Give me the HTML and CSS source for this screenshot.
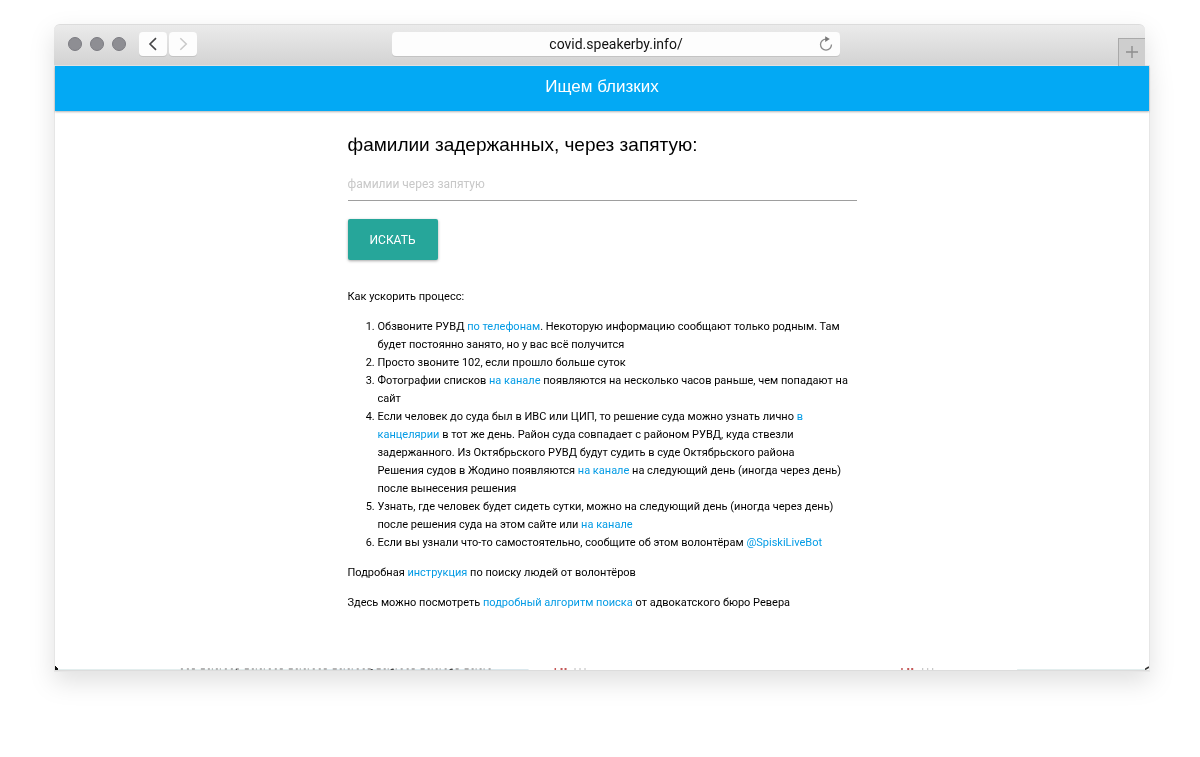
FILE: index.html
```html
<!DOCTYPE html>
<html lang="ru">
<head>
<meta charset="utf-8">
<meta name="viewport" content="width=device-width, initial-scale=1">
<title>Ищем близких</title>
<link rel="stylesheet" href="styles.css">
</head>
<body>
<div class="window">
  <div class="toolbar">
    <div class="toolbar-left">
      <div class="lights"><span class="light"></span><span class="light"></span><span class="light"></span></div>
      <div class="nav">
        <button class="nav-button" type="button" aria-label="Назад"><svg width="28" height="24" viewBox="0 0 28 24"><path d="M17 6.2 11 12l6 5.8" fill="none" stroke="#454547" stroke-width="1.6"/></svg></button>
        <button class="nav-button" type="button" aria-label="Вперёд"><svg width="28" height="24" viewBox="0 0 28 24"><path d="M11.3 6.2 17.3 12l-6 5.8" fill="none" stroke="#c9c9c9" stroke-width="1.5"/></svg></button>
      </div>
    </div>
    <div class="address">
      <input class="address-input" type="text" aria-label="Адрес" value="covid.speakerby.info/">
      <button class="reload" type="button" aria-label="Обновить"><svg width="14" height="16" viewBox="0 0 14 16"><path d="M7 3.1A5.5 5.5 0 1 0 12.5 8.6" fill="none" stroke="#8a8a8a" stroke-width="1.3"/><path d="M6.2.3 10.8 3.1 6.2 6z" fill="#777"/></svg></button>
    </div>
    <div class="toolbar-right">
      <button class="new-tab" type="button" aria-label="Новая вкладка"><svg width="26" height="27" viewBox="0 0 26 27"><path d="M13 7v12M7 13h12" stroke="#8d8d8d" stroke-width="1.4"/></svg></button>
    </div>
  </div>
  <div class="page">
    <header class="site-header">Ищем близких</header>
    <main class="content">
      <form class="search">
        <label class="search-label" for="names">фамилии задержанных, через запятую:</label>
        <input class="search-input" id="names" type="text" placeholder="фамилии через запятую">
        <button class="search-button" type="button">ИСКАТЬ</button>
      </form>
      <p class="text">Как ускорить процесс:</p>
      <ol class="steps">
        <li>Обзвоните РУВД <a href="#">по телефонам</a>. Некоторую информацию сообщают только родным. Там<br>будет постоянно занято, но у вас всё получится</li>
        <li>Просто звоните 102, если прошло больше суток</li>
        <li>Фотографии списков <a href="#">на канале</a> появляются на несколько часов раньше, чем попадают на<br>сайт</li>
        <li>Если человек до суда был в ИВС или ЦИП, то решение суда можно узнать лично <a href="#">в<br>канцелярии</a> в тот же день. Район суда совпадает с районом РУВД, куда ствезли<br>задержанного. Из Октябрьского РУВД будут судить в суде Октябрьского района<br>Решения судов в Жодино появляются <a href="#">на канале</a> на следующий день (иногда через день)<br>после вынесения решения</li>
        <li>Узнать, где человек будет сидеть сутки, можно на следующий день (иногда через день)<br>после решения суда на этом сайте или <a href="#">на канале</a></li>
        <li>Если вы узнали что-то самостоятельно, сообщите об этом волонтёрам <a href="#">@SpiskiLiveBot</a></li>
      </ol>
      <p class="text">Подробная <a href="#">инструкция</a> по поиску людей от волонтёров</p>
      <p class="text">Здесь можно посмотреть <a href="#">подробный алгоритм поиска</a> от адвокатского бюро Ревера</p>
    </main>
    <div class="edge">
      <svg class="edge-corner" width="3" height="4" viewBox="0 0 3 4"><path d="M0 0h1v1h1v1h1v2H0z" fill="#111"/></svg>
      <svg class="edge-marks" viewBox="0 0 1088 4" preserveAspectRatio="none">
        <path d="M0 3.5H268M960 3.5h128" stroke="#e3eeee"/>
        <path d="M268 3.5h203" stroke="#dbe8ed"/>
        <path d="M123 3h312" stroke="#b4b4b4" stroke-width="2" stroke-dasharray="2 4 2 3 3 6 4 3 2 2 1 3 2 2 1 4"/>
        <path d="M178 3.5h1M313 3.5h2M333 3.5h3M392 3.5h3" stroke="#444"/>
        <path d="M497 3h1.500M503 3h2M507 3h2M844 3h1.500M850 3h2M854 3h2" stroke="#c45757" stroke-width="2"/>
        <path d="M517 3h1M522 3h1M527 3h1M865 3h1M870 3h1M875 3h1" stroke="#bbb" stroke-width="2"/>
      </svg>
      <svg class="edge-corner" width="4" height="4" viewBox="0 0 4 4"><path d="M0 3.500 4 1" stroke="#333" stroke-width="1.500"/></svg>
    </div>
  </div>
</div>
</body>
</html>
```
FILE: styles.css
```css
* { box-sizing: border-box; }

body {
  margin: 0;
  padding: 24px 51px 40px 54px;
  background: #fff;
  color: #000;
  font-family: Roboto, "Liberation Sans", Arial, sans-serif;
  font-size: 11px;
  line-height: 18px;
}

button, input { font-family: inherit; border: 0; padding: 0; }
a { color: #039be5; text-decoration: none; }

.window { filter: drop-shadow(0 10px 12px rgba(0, 0, 0, 0.12)); }

.toolbar {
  display: grid;
  grid-template-columns: 17fr minmax(0, 448px) 16fr;
  align-items: start;
  height: 42px;
  margin-right: 4px;
  padding: 7px 0 0 14px;
  border-top: 1px solid #dcdcdc;
  border-radius: 6px 6px 0 0;
  background: linear-gradient(#ebebeb, #d2d2d2);
}

.toolbar-left { display: flex; align-items: center; gap: 13px; }
.lights { display: flex; gap: 8px; }
.light { width: 14px; height: 14px; border: 1px solid #7c7c82; border-radius: 50%; background: #8e8e93; }
.nav { display: flex; gap: 2px; }

.nav-button {
  display: flex;
  border-radius: 4px;
  background: #fdfdfd;
  box-shadow: 0 1px 0 #c3c3c3;
}

.address {
  display: flex;
  align-items: center;
  height: 24px;
  padding: 0 7px 0 21px;
  border-radius: 4px;
  background: #fdfdfd;
  box-shadow: 0 1px 0 #c3c3c3;
}

.address-input {
  flex: 1;
  min-width: 0;
  background: none;
  color: #111;
  font-size: 14px;
  text-align: center;
}

.reload { display: flex; background: none; }
.toolbar-right { display: flex; justify-content: flex-end; align-self: end; }

.new-tab {
  display: flex;
  border-top: 1px solid #a9a9a9;
  border-left: 1px solid #a9a9a9;
  background: #cecece;
}

.page { margin-left: 1px; background: #fff; box-shadow: 0 0 0 1px #e6e6e6; }

.site-header {
  padding: 11px 0 14px;
  background: #03a9f4;
  box-shadow: 0 1px 2px rgba(0, 0, 0, 0.3);
  color: #fff;
  font-family: "Liberation Sans", Arial, sans-serif;
  font-size: 17px;
  line-height: 20px;
  text-align: center;
}

.content { max-width: 509px; margin: 0 auto; padding: 22px 0 43px; }
.search { display: flex; flex-direction: column; align-items: flex-start; margin-bottom: 28px; }

.search-label {
  color: #000;
  font-family: "Liberation Sans", Arial, sans-serif;
  font-size: 19px;
  line-height: 24px;
}

.search-input {
  width: 100%;
  height: 34px;
  margin: 10px 0 18px;
  border-bottom: 1px solid #9e9e9e;
  background: none;
  font-size: 12px;
}

.search-input::placeholder { color: #c8c8c8; }

.search-button {
  width: 90px;
  height: 41px;
  border-radius: 2px;
  background: #26a69a;
  box-shadow: 0 1px 3px rgba(0, 0, 0, 0.35);
  color: #fff;
  font-size: 12px;
}

.text { margin: 0 0 12px; }
.steps { margin: 0 0 12px; padding-left: 30px; }

.edge { display: flex; align-items: flex-end; height: 4px; border-bottom: 1px solid #dcdcdc; }
.edge-corner { flex: none; }
.edge-marks { flex: 1; min-width: 0; height: 4px; }
```
